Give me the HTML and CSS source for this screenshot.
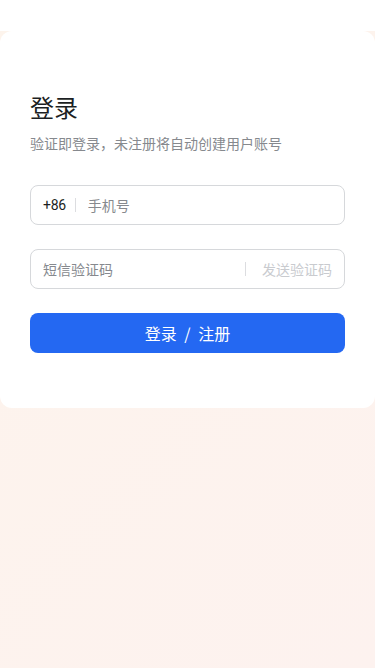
FILE: index.html
```html
<!DOCTYPE html>
<html lang="zh-CN">
<head>
  <meta charset="UTF-8" />
  <meta name="viewport" content="width=device-width, initial-scale=1.0"/>
  <title>登录</title>
  <link rel="stylesheet" href="styles.css">
</head>
<body>
  <div class="topbar"></div>
  <div class="card">
    <h1 class="title">登录</h1>
    <p class="subtitle">验证即登录，未注册将自动创建用户账号</p>

    <div class="field">
      <span class="prefix">+86</span>
      <span class="sep"></span>
      <input type="tel" placeholder="手机号">
    </div>

    <div class="field">
      <input type="text" placeholder="短信验证码">
      <span class="sep"></span>
      <span class="send">发送验证码</span>
    </div>

    <button class="submit">登录 / 注册</button>
  </div>
</body>
</html>
```

FILE: styles.css
```css
* { box-sizing: border-box; }
body {
  margin: 0;
  min-height: 668px;
  font-family: "Noto Sans CJK SC", "Noto Sans", sans-serif;
  background: linear-gradient(135deg, #fdf4ec 0%, #fdf2ef 100%);
}
.topbar { height: 31px; background: #fff; }
.card {
  background: #fff;
  border-radius: 12px;
  padding: 60px 30px 55px;
}
.title {
  margin: 0;
  font-size: 24px;
  line-height: 32px;
  font-weight: 400;
  color: #1c1f23;
}
.subtitle {
  margin: 10px 0 32px;
  font-size: 14px;
  line-height: 20px;
  color: #86898e;
}
.field {
  display: flex;
  align-items: center;
  height: 40px;
  border: 1px solid #d6d8db;
  border-radius: 8px;
  padding: 0 12px;
  margin-bottom: 24px;
}
.field input {
  flex: 1;
  min-width: 0;
  border: none;
  outline: none;
  font: inherit;
  font-size: 14px;
  color: #1c1f23;
  background: transparent;
  padding: 0;
}
.field input::placeholder { color: #86898e; }
.prefix {
  font-family: Roboto, "Noto Sans", sans-serif;
  font-size: 14px;
  letter-spacing: -0.3px;
  color: #1c1f23;
}
.sep {
  width: 1px;
  height: 14px;
  background: #dcdde0;
  margin: 0 12px 0 9px;
}
.field input + .sep { margin: 0 16px 0 12px; }
.send { font-size: 14px; color: #c9cbcf; }
.submit {
  display: block;
  width: 100%;
  height: 40px;
  border: none;
  border-radius: 8px;
  background: #2468f2;
  color: #fff;
  font: inherit;
  font-size: 16px;
  word-spacing: 4px;
  cursor: pointer;
}
```
